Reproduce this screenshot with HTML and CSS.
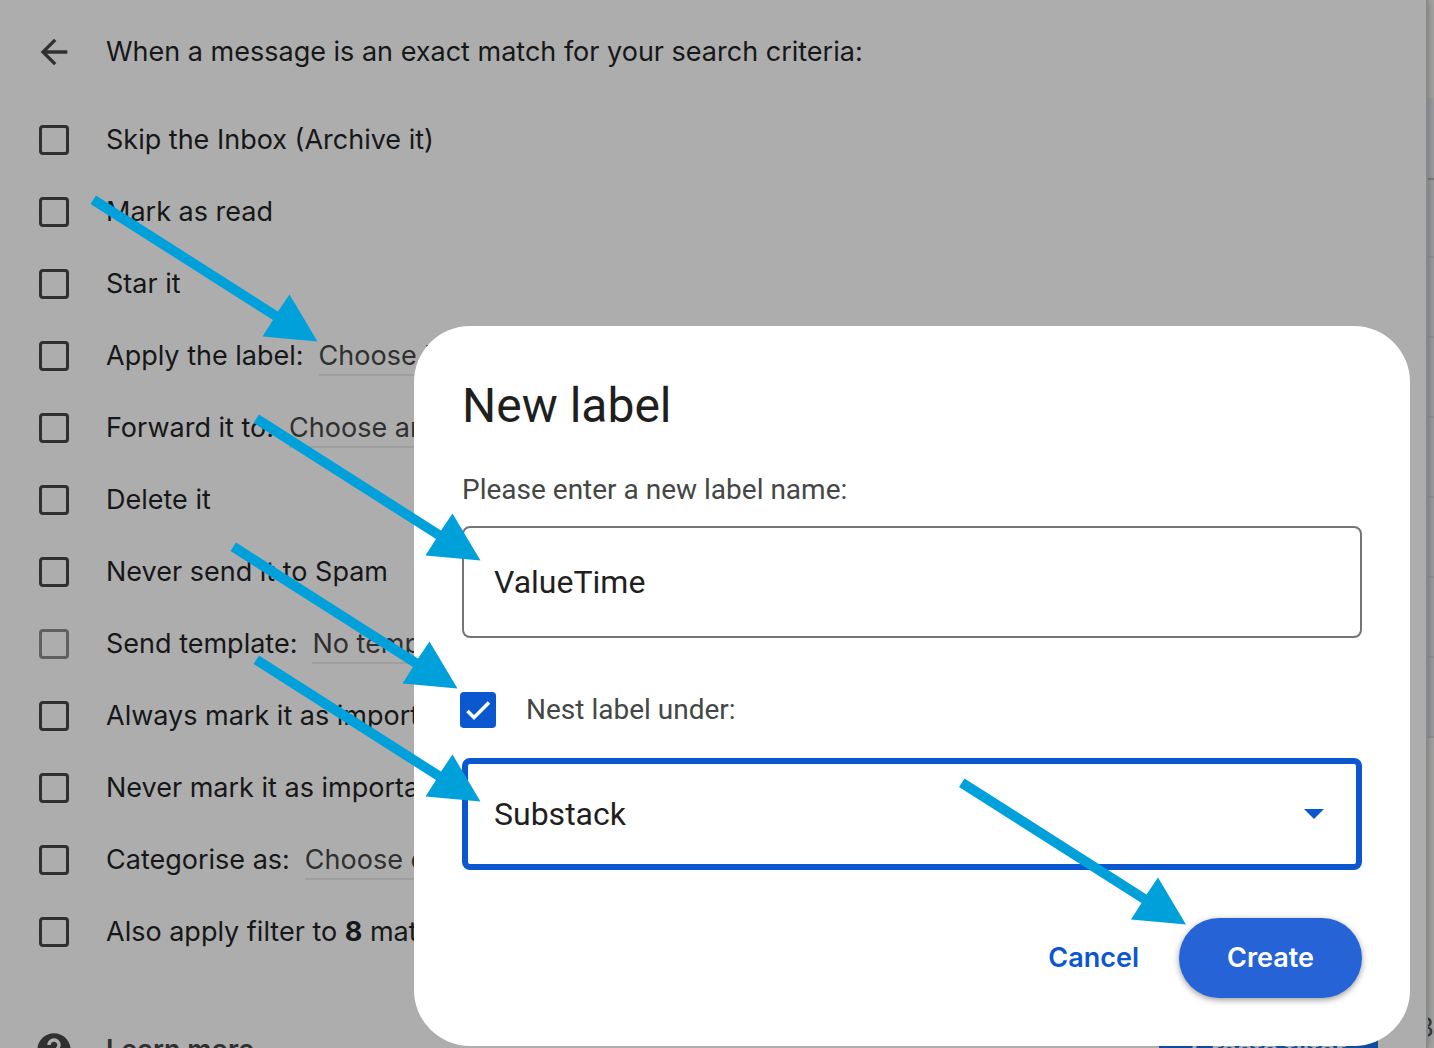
FILE: index.html
```html
<!DOCTYPE html>
<html lang="en-GB">
<head>
<meta charset="utf-8">
<title>Create filter</title>
<meta name="viewport" content="width=device-width, initial-scale=1">
<link rel="stylesheet" href="styles.css">
</head>
<body>
<div class="page">
  <main class="filter">
    <header class="filter-head">
      <button class="icon-button" type="button" aria-label="Back">
        <svg class="icon" viewBox="0 0 24 24" aria-hidden="true"><path d="M20 11H7.83l5.59-5.59L12 4l-8 8 8 8 1.41-1.41L7.83 13H20v-2z"/></svg>
      </button>
      <p>When a message is an exact match for your search criteria:</p>
    </header>
    <ul class="options">
      <li class="option"><input class="box" type="checkbox" id="skip"><label for="skip">Skip the Inbox (Archive it)</label></li>
      <li class="option"><input class="box" type="checkbox" id="read"><label for="read">Mark as read</label></li>
      <li class="option"><input class="box" type="checkbox" id="star"><label for="star">Star it</label></li>
      <li class="option"><input class="box" type="checkbox" id="apply"><div class="choice"><label for="apply">Apply the label:</label><select class="pick" aria-label="Label"><option>Choose label...</option></select></div></li>
      <li class="option"><input class="box" type="checkbox" id="forward"><div class="choice"><label for="forward">Forward it to:</label><select class="pick" aria-label="Forwarding address"><option>Choose an address...</option></select></div></li>
      <li class="option"><input class="box" type="checkbox" id="delete"><label for="delete">Delete it</label></li>
      <li class="option"><input class="box" type="checkbox" id="spam"><label for="spam">Never send it to Spam</label></li>
      <li class="option"><input class="box" type="checkbox" id="template" disabled><div class="choice"><label for="template">Send template:</label><select class="pick" aria-label="Template"><option>No templates</option></select></div></li>
      <li class="option"><input class="box" type="checkbox" id="important"><label for="important">Always mark it as important</label></li>
      <li class="option"><input class="box" type="checkbox" id="unimportant"><label for="unimportant">Never mark it as important</label></li>
      <li class="option"><input class="box" type="checkbox" id="category"><div class="choice"><label for="category">Categorise as:</label><select class="pick" aria-label="Category"><option>Choose category...</option></select></div></li>
      <li class="option"><input class="box" type="checkbox" id="also"><label for="also">Also apply filter to <b>8</b> matching conversations.</label></li>
    </ul>
    <footer class="filter-foot">
      <svg class="icon" viewBox="0 0 24 24" aria-hidden="true"><path d="M12 2C6.48 2 2 6.48 2 12s4.480 10 10 10 10-4.480 10-10S17.520 2 12 2zm1 17h-2v-2h2v2zm2.070-7.750l-.9.920C13.450 12.900 13 13.500 13 15h-2v-.5c0-1.100.450-2.100 1.170-2.830l1.240-1.260c.370-.360.590-.860.590-1.410 0-1.100-.9-2-2-2s-2 .9-2 2H8c0-2.210 1.790-4 4-4s4 1.790 4 4c0 .880-.360 1.680-.930 2.250z"/></svg>
      <a class="learn" href="#">Learn more</a>
      <button class="create-filter" type="button">Create filter</button>
    </footer>
  </main>
  <aside class="mail" aria-hidden="true">
    <div class="mail-top"></div>
    <div class="mail-bar"></div>
    <div class="mail-row"></div>
    <div class="mail-row"></div>
    <div class="mail-row"></div>
    <div class="mail-row"></div>
    <div class="mail-row"></div>
    <div class="mail-row"></div>
    <div class="mail-row"></div>
    <div class="mail-count">3</div>
  </aside>
</div>

<div class="overlay">
  <form class="dialog" role="dialog" aria-labelledby="dialog-title">
    <h1 id="dialog-title">New label</h1>
    <label class="caption" for="name">Please enter a new label name:</label>
    <input class="field" type="text" id="name" value="ValueTime">
    <div class="nest">
      <input class="nest-box" type="checkbox" id="nest" checked>
      <label class="caption" for="nest">Nest label under:</label>
    </div>
    <div class="parent">
      <select class="field parent-select" aria-label="Parent label"><option>Substack</option></select>
      <svg class="caret" viewBox="0 0 20 10" aria-hidden="true"><path d="M0 0h20L10 10z"/></svg>
    </div>
    <div class="actions">
      <button class="cancel" type="button">Cancel</button>
      <button class="create" type="button">Create</button>
    </div>
  </form>
</div>

<svg class="arrows" aria-hidden="true">
  <defs>
    <path id="arrow" d="M0 0L-28 -47L-39.500 -30L-221.500 -146L-227 -137.500L-44.500 -21.500L-55 -5Z"/>
  </defs>
  <use href="#arrow" x="317.500" y="341.500"/>
  <use href="#arrow" x="480.500" y="560.500"/>
  <use href="#arrow" x="457.500" y="688.500"/>
  <use href="#arrow" x="480.500" y="801.500"/>
  <use href="#arrow" x="1186" y="924.500"/>
</svg>
</body>
</html>
```

FILE: styles.css
```css
* { box-sizing: border-box; }

body {
  margin: 0;
  height: 100vh;
  overflow: hidden;
  position: relative;
  background: #a5a5a4;
  color: #161718;
  font: 400 27px/36px Inter, "Liberation Sans", sans-serif;
}

button, input, select { font: inherit; color: inherit; margin: 0; }
button { border: 0; background: none; padding: 0; cursor: pointer; }

.page { display: flex; height: 100%; overflow: hidden; }

/* Filter panel, dimmed behind the dialog */
.filter {
  flex: 1;
  min-width: 0;
  padding: 0 48px 0 34px;
  background: #adadad;
  border-right: 2px solid #88898b;
  box-shadow: 0 0 8px rgba(0, 0, 0, .3);
  position: relative;
}

.filter-head, .option, .filter-foot {
  display: grid;
  grid-template-columns: 40px 1fr;
  column-gap: 32px;
  align-items: center;
  white-space: nowrap;
}
.filter-head { height: 104px; }
.filter-head p { margin: 0; }
.icon-button { display: flex; }
.icon { width: 40px; height: 40px; fill: #303030; }

.options { list-style: none; margin: 0; padding: 0; }
.option { height: 72px; }
.option b { font-weight: 700; }

.box {
  appearance: none;
  justify-self: center;
  width: 30px;
  height: 30px;
  border: 3px solid #303030;
  border-radius: 4px;
}
.box:disabled { border-color: #606060; }

.choice { display: flex; align-items: center; gap: 15px; }
.pick {
  appearance: none;
  height: 40px;
  padding: 2px 0 0;
  border: 0;
  border-bottom: 2px solid #9f9f9f;
  border-radius: 0;
  background: none;
  color: #303030;
}

.filter-foot {
  grid-template-columns: 40px 1fr auto;
  padding-top: 46px;
}
.learn { color: #303030; font-weight: 600; text-decoration: none; }
.create-filter {
  height: 72px;
  padding: 0 32px;
  background: #114b9c;
  color: #adadad;
  font-weight: 600;
}

/* Edge of the mail list */
.mail { width: 6px; overflow: hidden; display: flex; flex-direction: column; }
.mail-top { height: 98px; }
.mail-bar { height: 82px; background: #9b9da2; border-bottom: 2px solid #7c7d80; }
.mail-row { height: 80px; background: #9a9ca1; border-bottom: 2px solid #909297; }
.mail-row:nth-child(3) { height: 78px; }
.mail-count {
  margin-top: auto;
  display: flex;
  justify-content: flex-end;
  height: 38px;
  color: #3a3a3c;
}

/* New label dialog */
.overlay {
  position: absolute;
  inset: 0;
  padding: 326px 24px 0 414px;
}
.dialog {
  display: flex;
  flex-direction: column;
  padding: 48px;
  border-radius: 56px;
  background: #fff;
  color: #1f1f1f;
}
.dialog h1 { margin: 0 0 36px; font: 400 48px/64px Roboto, sans-serif; }
.caption { color: #444746; font: 400 28px/32px Roboto, sans-serif; }
.field {
  width: 100%;
  height: 112px;
  margin-top: 20px;
  padding: 0 30px;
  border: 2px solid #747575;
  border-radius: 8px;
  background: #fff;
  font-family: Roboto, sans-serif;
  font-size: 32px;
}
.nest { display: flex; align-items: center; gap: 30px; margin: 54px 0 30px -2px; }
.nest-box {
  appearance: none;
  width: 36px;
  height: 36px;
  border-radius: 4px;
  background: #0b57d0 url("data:image/svg+xml,%3Csvg xmlns='http://www.w3.org/2000/svg' viewBox='0 0 36 36'%3E%3Cpath d='M7.500 19l6.500 6.500L29 10.500' fill='none' stroke='white' stroke-width='3.500'/%3E%3C/svg%3E");
}
.parent { display: grid; align-items: center; }
.parent > * { grid-area: 1 / 1; }
.parent-select {
  appearance: none;
  margin: 0;
  padding: 0 26px;
  border: 6px solid #0b57d0;
}
.caret { justify-self: end; width: 20px; height: 10px; margin-right: 38px; fill: #0b57d0; pointer-events: none; }
.actions { display: flex; justify-content: flex-end; gap: 16px; margin-top: 48px; }
.actions button { height: 80px; border-radius: 40px; font-weight: 600; }
.actions .cancel { padding: 0 24px; color: #0b57d0; }
.actions .create {
  padding: 0 48px;
  background: #2563d6;
  color: #fff;
  box-shadow: 0 2px 6px rgba(0, 0, 0, .4);
}

/* Pointers drawn over the page */
.arrows {
  position: absolute;
  inset: 0;
  width: 100%;
  height: 100%;
  fill: #00a1db;
  pointer-events: none;
}
```
